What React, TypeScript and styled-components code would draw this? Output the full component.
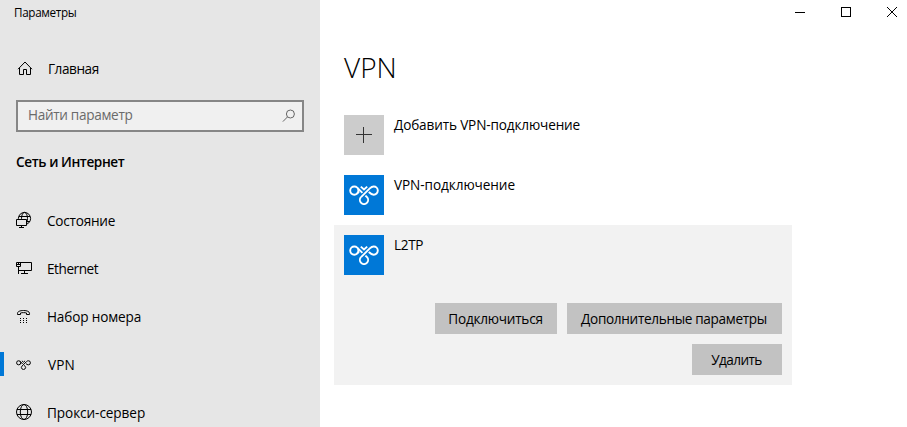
import React from "react";
import styled, { createGlobalStyle } from "styled-components";

const GlobalStyle = createGlobalStyle`
  * { box-sizing: border-box; }
  body {
    margin: 0;
    background: #fff;
    color: #000;
    font-family: "Open Sans", "Noto Sans", sans-serif;
    overflow: hidden;
  }
`;

const Window = styled.div`
  display: flex;
  width: 907px;
  height: 427px;
  overflow: hidden;
`;

const Sidebar = styled.aside`
  display: flex;
  flex-direction: column;
  flex: 0 0 320px;
  overflow: hidden;
  background: #e6e6e6;

  & > * {
    flex-shrink: 0;
  }
`;

const Text = styled.span<{ $tracking?: number }>`
  font-size: 13.6px;
  line-height: 20px;
  letter-spacing: ${(p) => p.$tracking ?? 0}px;
  white-space: nowrap;
`;

const WindowTitle = styled(Text)`
  height: 45px;
  padding: 2px 0 0 14px;
  font-size: 11.7px;
`;

const HomeLink = styled.a`
  display: flex;
  align-items: center;
  gap: 13px;
  height: 48px;
  padding-left: 15px;
`;

const SearchBox = styled.div`
  display: flex;
  align-items: flex-start;
  justify-content: space-between;
  height: 32px;
  margin: 7px 16px 0;
  padding: 3px 6px 0 10px;
  border: 2px solid #868686;
  background: #f0f0f0;
`;

const Placeholder = styled(Text)`
  color: #6a6a6a;
`;

const SearchGlyph = styled.svg`
  margin-top: 4px;
`;

const GroupTitle = styled(Text)`
  margin: 20px 0 25px 16px;
  font-weight: 600;
`;

const NavItem = styled.a<{ $active?: boolean }>`
  display: flex;
  align-items: center;
  height: 48px;
  gap: ${(p) => (p.$active ? 14 : 13)}px;
  padding-left: 14px;
  background: ${(p) =>
    p.$active
      ? "linear-gradient(#0078d7, #0078d7) 0 11px / 4px 24px no-repeat"
      : "none"};
`;

const Glyph = styled.svg`
  flex: none;
  width: 20px;
  height: 20px;
  fill: none;
  stroke: #000;
  stroke-width: 1;
`;

const Main = styled.main`
  display: flex;
  flex-direction: column;
  flex: 1;
`;

const WindowControls = styled.div`
  display: flex;
  justify-content: flex-end;
  gap: 36px;
  height: 47px;
  padding: 7px 10px 0 0;
`;

const PageTitle = styled.h1`
  margin: 0 0 18px 24px;
  font-size: 28px;
  font-weight: 300;
  line-height: 40px;
`;

const Connection = styled.div`
  display: flex;
  gap: 10px;
  height: 60px;
  padding: 10px 10px 0;
`;

const List = styled.section`
  display: flex;
  flex-direction: column;
  width: 458px;
  margin-left: 14px;
`;

const SelectedCard = styled.div`
  height: 160px;
  background: #f2f2f2;
`;

const Tile = styled.div<{ $muted?: boolean }>`
  display: flex;
  align-items: center;
  justify-content: center;
  width: 40px;
  height: 40px;
  background: ${(p) => (p.$muted ? "#cccccc" : "#0078d7")};
`;

const Actions = styled.div`
  display: flex;
  flex-wrap: wrap;
  justify-content: flex-end;
  gap: 10px;
  padding: 18px 10px 0;
`;

const ActionButton = styled.button<{ $width: number; $tracking: number }>`
  width: ${(p) => p.$width}px;
  height: 31px;
  padding: 1px 1px 0 0;
  border: 0;
  background: #c2c2c2;
  color: #000;
  font-family: inherit;
  font-size: 13.6px;
  line-height: 20px;
  letter-spacing: ${(p) => p.$tracking}px;
  white-space: nowrap;
`;

function VpnKnot({ width, height, color, weight }: { width: number; height: number; color: string; weight: number }) {
  return (
    <svg width={width} height={height} viewBox="0 0 30 20" fill="none" stroke={color} strokeWidth={weight}>
      <circle cx="5.3" cy="5.6" r="4.1" />
      <path d="M8.2 8.4L10.2 6.4" />
      <path d="M11.8 1.6L15 4.5L18.2 1.6" />
      <path d="M12 12.2L20.8 3.4C22.2 2 23.4 1.5 24.7 1.5A4.1 4.1 0 1 1 24.7 9.7C22.6 9.7 21.2 8.4 19.8 7" />
      <path d="M12 12.2A4.1 4.1 0 1 0 18 12.2L16.4 10.6" />
      <path d="M8.4 2.8L13.4 7.8" />
    </svg>
  );
}

const StatusIcon = () => (
  <Glyph viewBox="0 0 20 20">
    <circle cx="10.5" cy="7.5" r="6.1" />
    <ellipse cx="10.5" cy="7.5" rx="3" ry="6.1" />
    <path d="M5 5.5H16M5 10.5H16" />
    <path d="M2.5 8.5H12.5V14.5H2.5Z" fill="#e6e6e6" />
    <path d="M7.5 14.5V16.5M5 16.5H10" />
  </Glyph>
);

const EthernetIcon = () => (
  <Glyph viewBox="0 0 20 20">
    <path d="M2.5 3.5H17.5V11.5H4.5M2.5 3.5V7.5H6.5V3.5M4.5 7.5V15M4.5 4V6M2.5 5.5H6.5M10.5 11.5V14.5M7 14.5H14" />
  </Glyph>
);

const PhoneIcon = () => (
  <Glyph viewBox="0 0 20 20">
    <path d="M3.5 7.5V6.3C3.5 4.6 6 3.5 9.5 3.5S15.5 4.6 15.5 6.3V7.5H12.5V6C11 5.5 8 5.5 6.5 6V7.5Z" />
    <path d="M6 11.5h1M9 11.5h1M12 11.5h1M6 13.5h1M9 13.5h1M12 13.5h1M6 15.5h1M9 15.5h1M12 15.5h1" />
  </Glyph>
);

const VpnNavIcon = styled.span`
  display: flex;
  width: 20px;
  height: 20px;
  padding: 5px 0 0 2px;
`;

const GlobeIcon = () => (
  <Glyph viewBox="0 0 20 20">
    <circle cx="10" cy="9" r="7.5" />
    <ellipse cx="10" cy="9" rx="3.7" ry="7.5" />
    <path d="M3 6.5H17M3 11.5H17" />
  </Glyph>
);

export default function App() {
  return (
    <Window>
      <GlobalStyle />
      <Sidebar>
        <WindowTitle $tracking={-0.34}>Параметры</WindowTitle>
        <HomeLink>
          <Glyph viewBox="0 0 20 20">
            <path d="M3 10.2L10 3L17 10.2M4.5 9V15.5H8.5V10.5H11.5V15.5H15.5V9" />
          </Glyph>
          <Text $tracking={-0.45}>Главная</Text>
        </HomeLink>
        <SearchBox>
          <Placeholder $tracking={-0.32}>Найти параметр</Placeholder>
          <SearchGlyph width="14" height="14" viewBox="0 0 14 14" fill="none" stroke="#666">
            <circle cx="8.4" cy="5" r="4" />
            <path d="M5.4 8L.9 12.6" />
          </SearchGlyph>
        </SearchBox>
        <GroupTitle $tracking={-0.4}>Сеть и Интернет</GroupTitle>
        <NavItem>
          <StatusIcon />
          <Text $tracking={-0.24}>Состояние</Text>
        </NavItem>
        <NavItem>
          <EthernetIcon />
          <Text $tracking={-0.45}>Ethernet</Text>
        </NavItem>
        <NavItem>
          <PhoneIcon />
          <Text $tracking={-0.15}>Набор номера</Text>
        </NavItem>
        <NavItem $active>
          <VpnNavIcon>
            <VpnKnot width={15} height={10} color="#000" weight={2} />
          </VpnNavIcon>
          <Text $tracking={0.1}>VPN</Text>
        </NavItem>
        <NavItem>
          <GlobeIcon />
          <Text $tracking={-0.08}>Прокси-сервер</Text>
        </NavItem>
      </Sidebar>
      <Main>
        <WindowControls>
          <svg width="10" height="10" stroke="#000">
            <path d="M0 5.5H10" />
          </svg>
          <svg width="10" height="10" stroke="#000" fill="none">
            <rect x=".5" y=".5" width="9" height="9" />
          </svg>
          <svg width="10" height="10" stroke="#000">
            <path d="M0 0L10 10M10 0L0 10" />
          </svg>
        </WindowControls>
        <PageTitle>VPN</PageTitle>
        <List>
          <Connection>
            <Tile $muted>
              <svg width="16" height="16" stroke="#333">
                <path d="M0 7.5H16M7.5 0V16" />
              </svg>
            </Tile>
            <Text $tracking={-0.15}>Добавить VPN-подключение</Text>
          </Connection>
          <Connection>
            <Tile>
              <VpnKnot width={30} height={20} color="#fff" weight={1.9} />
            </Tile>
            <Text $tracking={-0.08}>VPN-подключение</Text>
          </Connection>
          <SelectedCard>
            <Connection>
              <Tile>
                <VpnKnot width={30} height={20} color="#fff" weight={1.9} />
              </Tile>
              <Text $tracking={-0.35}>L2TP</Text>
            </Connection>
            <Actions>
              <ActionButton $width={122} $tracking={-0.24}>Подключиться</ActionButton>
              <ActionButton $width={215} $tracking={-0.33}>Дополнительные параметры</ActionButton>
              <ActionButton $width={90} $tracking={-0.6}>Удалить</ActionButton>
            </Actions>
          </SelectedCard>
        </List>
      </Main>
    </Window>
  );
}
